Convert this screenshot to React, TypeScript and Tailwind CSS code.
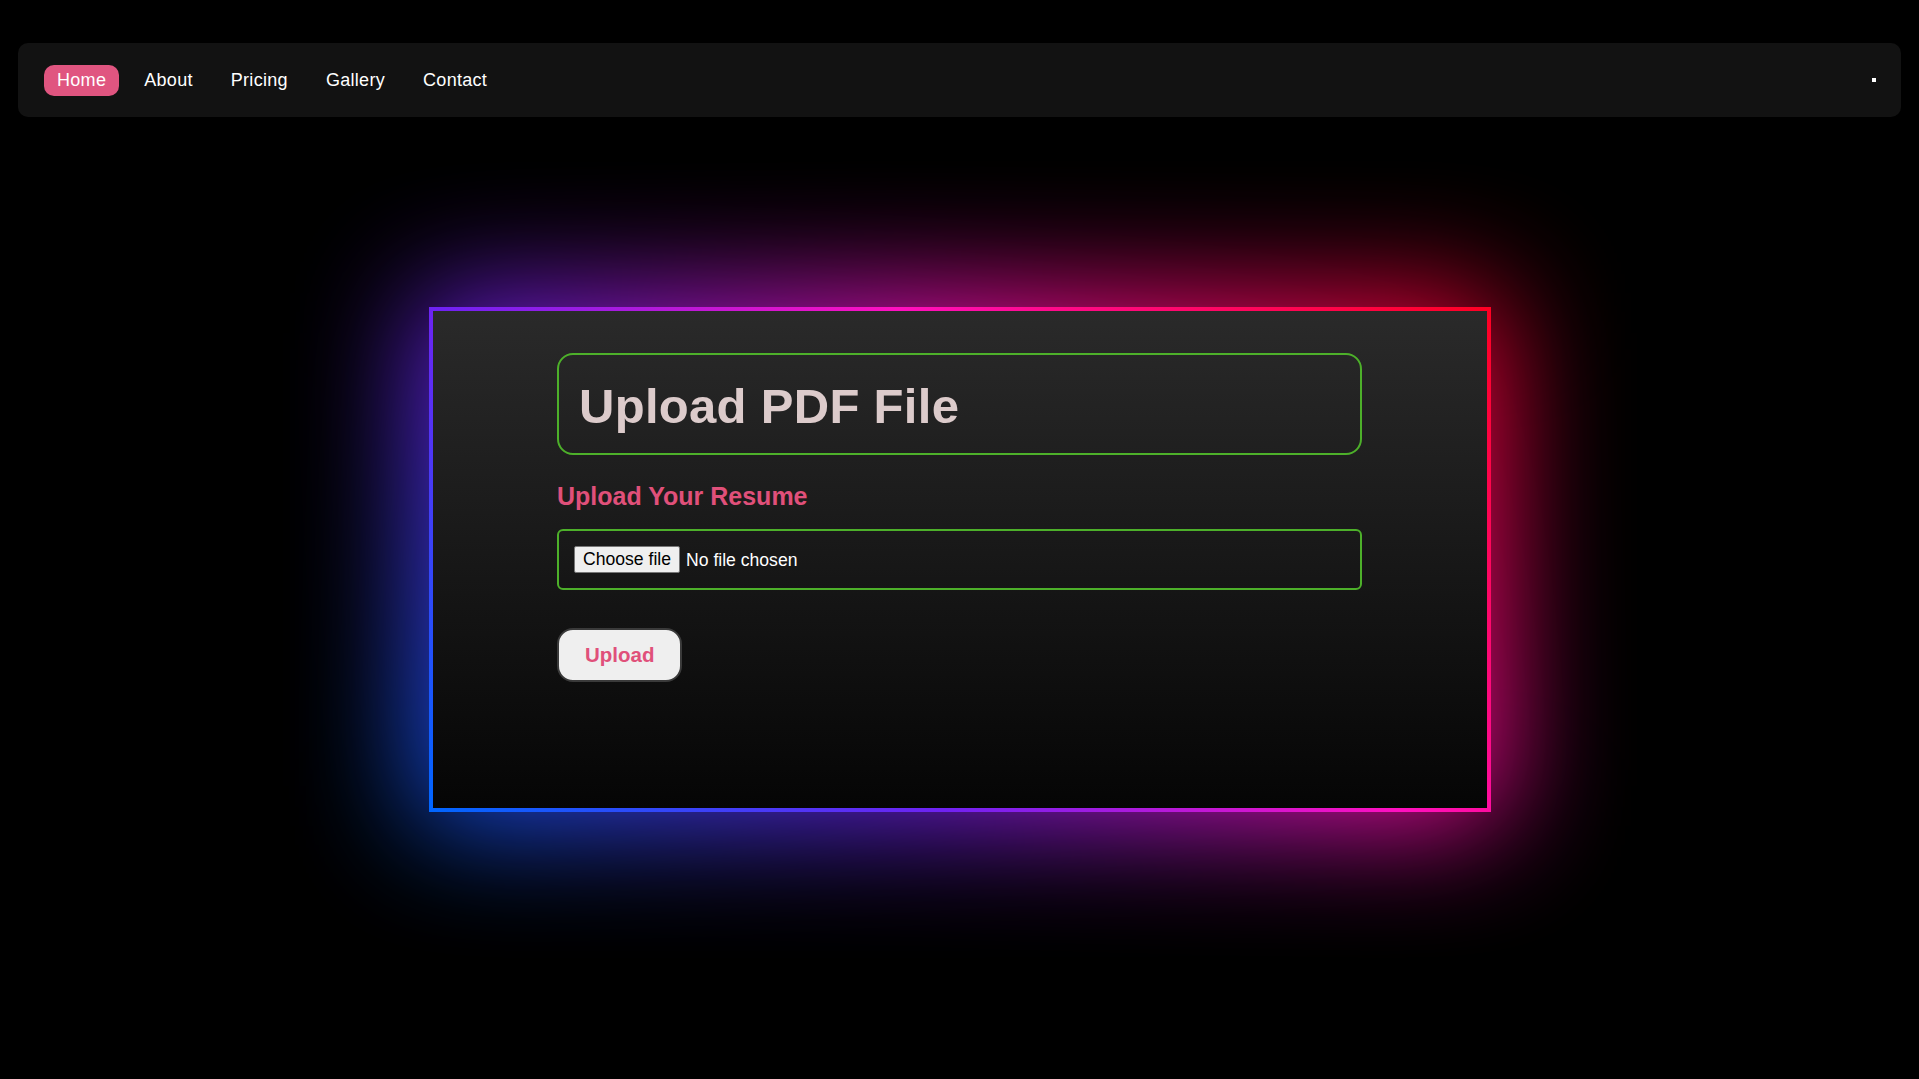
import { useState } from 'react';

const links = ['Home', 'About', 'Pricing', 'Gallery', 'Contact'];

const Navbar = () => {
    const [active, setActive] = useState('Home');

    return (
        <nav className="mx-[18px] h-[74px] rounded-[10px] bg-[#121212] flex items-center justify-between pl-[26px] pr-[25px]">
            <ul className="flex items-center gap-3">
                {links.map(link => (
                    <li key={link}>
                        <a
                            href="#"
                            onClick={e => { e.preventDefault(); setActive(link); }}
                            className={
                                active === link
                                    ? 'block rounded-[10px] bg-[#e05580] px-[13px] py-[5px] text-[18px] leading-[21px] tracking-[0.3px] text-white'
                                    : 'block rounded-[10px] px-[13px] py-[5px] text-[18px] leading-[21px] tracking-[0.3px] text-white'
                            }
                        >
                            {link}
                        </a>
                    </li>
                ))}
            </ul>
            <span className="block w-[4px] h-[4px] bg-white" />
        </nav>
    );
};

export default function App() {
    const [fileName, setFileName] = useState<string | null>(null);

    return (
        <div className="min-h-screen overflow-hidden bg-black pt-[43px] pb-[266px] font-['Liberation_Sans',Arial,sans-serif]">
            <Navbar />

            <div className="relative mx-auto mt-[190px] w-[1062px]">
                {/* glow */}
                <div className="absolute -inset-[14px] bg-[linear-gradient(45deg,#0066ff_0%,#7022f2_33%,#ff10c0_62%,#ff0a8a_72%,#ff0022_100%)] blur-[60px] opacity-90" />

                {/* gradient border */}
                <div className="relative p-[4px] bg-[linear-gradient(45deg,#0066ff_0%,#7022f2_33%,#ff10c0_62%,#ff0a8a_72%,#ff0022_100%)]">
                    <div className="h-[497px] bg-[linear-gradient(180deg,#2a2a2a_0%,#050505_100%)] pt-[42px]">
                        <div className="mx-auto w-[805px]">
                            <div className="rounded-[16px] border-2 border-[#4db02a] px-5 pt-[22px] pb-[18px]">
                                <h1 className="text-[49px] leading-[58px] font-bold tracking-[0.3px] text-[#dccbcb]">Upload PDF File</h1>
                            </div>

                            <h2 className="mt-[27px] text-[25px] leading-[28px] font-bold text-[#e0507a]">Upload Your Resume</h2>

                            <label className="mt-[19px] rounded-[6px] border-2 border-[#4db02a] p-[15px] h-[61px] flex items-center cursor-pointer">
                                <input
                                    type="file"
                                    accept="application/pdf"
                                    onChange={e => setFileName(e.target.files?.[0]?.name ?? null)}
                                    className="hidden"
                                />
                                <span className="block h-[27px] w-[106px] border border-[#767676] rounded-[2px] bg-[#efefef] text-center text-[17.6px] leading-[25px] text-black">Choose file</span>
                                <span className="ml-[6px] text-[17.6px] leading-[20px] text-white">{fileName ?? 'No file chosen'}</span>
                            </label>

                            <button
                                type="button"
                                className="mt-[38px] rounded-[16px] border-2 border-[#3a3a3a] bg-[#efefef] px-[26px] py-[13px] text-[20.5px] leading-[24px] font-bold text-[#e0507a]"
                            >
                                Upload
                            </button>
                        </div>
                    </div>
                </div>
            </div>
        </div>
    );
}
